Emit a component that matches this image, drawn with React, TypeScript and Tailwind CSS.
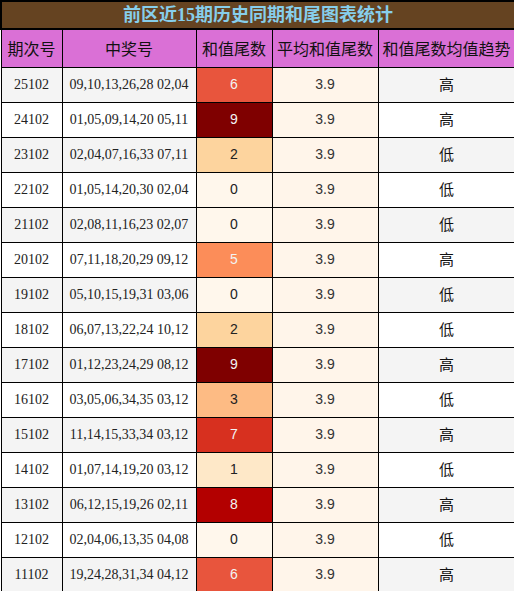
import React from 'react';

const rows = [
  { issue: '25102', nums: '09,10,13,26,28 02,04', tail: 6, trend: '高' },
  { issue: '24102', nums: '01,05,09,14,20 05,11', tail: 9, trend: '高' },
  { issue: '23102', nums: '02,04,07,16,33 07,11', tail: 2, trend: '低' },
  { issue: '22102', nums: '01,05,14,20,30 02,04', tail: 0, trend: '低' },
  { issue: '21102', nums: '02,08,11,16,23 02,07', tail: 0, trend: '低' },
  { issue: '20102', nums: '07,11,18,20,29 09,12', tail: 5, trend: '高' },
  { issue: '19102', nums: '05,10,15,19,31 03,06', tail: 0, trend: '低' },
  { issue: '18102', nums: '06,07,13,22,24 10,12', tail: 2, trend: '低' },
  { issue: '17102', nums: '01,12,23,24,29 08,12', tail: 9, trend: '高' },
  { issue: '16102', nums: '03,05,06,34,35 03,12', tail: 3, trend: '低' },
  { issue: '15102', nums: '11,14,15,33,34 03,12', tail: 7, trend: '高' },
  { issue: '14102', nums: '01,07,14,19,20 03,12', tail: 1, trend: '低' },
  { issue: '13102', nums: '06,12,15,19,26 02,11', tail: 8, trend: '高' },
  { issue: '12102', nums: '02,04,06,13,35 04,08', tail: 0, trend: '低' },
  { issue: '11102', nums: '19,24,28,31,34 04,12', tail: 6, trend: '高' },
];

// OrRd scale for the tail value cell
const tailClass: Record<number, string> = {
  0: 'bg-[#fff7ec] text-[#222]',
  1: 'bg-[#fee8c8] text-[#222]',
  2: 'bg-[#fdd49e] text-[#222]',
  3: 'bg-[#fdbb84] text-[#222]',
  4: 'bg-[#fc8d59] text-[#f3f3f3]',
  5: 'bg-[#fc8d59] text-[#f3f3f3]',
  6: 'bg-[#e8553d] text-[#f3f3f3]',
  7: 'bg-[#d7301f] text-[#f3f3f3]',
  8: 'bg-[#b30000] text-[#f3f3f3]',
  9: 'bg-[#7f0000] text-[#f3f3f3]',
};

const serif = "font-['Liberation_Serif','Noto_Sans_CJK_SC',serif]";
const sans = "font-['Liberation_Sans','Noto_Sans_CJK_SC',sans-serif]";

export default function App() {
  return (
    <div className="w-[514px] h-[591px] bg-white">
      <table className="w-[514px] table-fixed border-collapse">
        <colgroup>
          <col className="w-[61px]" />
          <col className="w-[134px]" />
          <col className="w-[76px]" />
          <col className="w-[106px]" />
          <col className="w-[137px]" />
        </colgroup>
        <thead>
          <tr className="h-[28px]">
            <th
              colSpan={5}
              className={`border-2 border-black bg-[#654321] text-[#87ceeb] text-[18px] font-bold leading-none ${serif}`}
            >
              前区近15期历史同期和尾图表统计
            </th>
          </tr>
          <tr className="h-[38px] bg-[#da70d6] text-[#111] text-[16px] font-normal font-['Noto_Sans_CJK_SC',sans-serif]">
            <th className="border border-black font-normal">期次号</th>
            <th className="border border-black font-normal">中奖号</th>
            <th className="border border-black font-normal">和值尾数</th>
            <th className="border border-black font-normal">平均和值尾数</th>
            <th className="border border-black font-normal">和值尾数均值趋势</th>
          </tr>
        </thead>
        <tbody>
          {rows.map((r, i) => {
            const bg = i % 2 === 0 ? 'bg-[#f4f4f4]' : 'bg-white';
            return (
              <tr key={r.issue} className="h-[35px] text-[14px] text-center">
                <td className={`border border-black ${bg} text-[#222] ${serif}`}>{r.issue}</td>
                <td className={`border border-black ${bg} text-[#222] whitespace-nowrap ${serif}`}>{r.nums}</td>
                <td className={`border border-black ${tailClass[r.tail]} ${sans}`}>{r.tail}</td>
                <td className={`border border-black bg-[#fff5ea] text-[#333] ${sans}`}>3.9</td>
                <td className={`border border-black ${bg} text-[#111] font-['Noto_Sans_CJK_SC',sans-serif] text-[15px]`}>
                  {r.trend}
                </td>
              </tr>
            );
          })}
        </tbody>
      </table>
    </div>
  );
}
